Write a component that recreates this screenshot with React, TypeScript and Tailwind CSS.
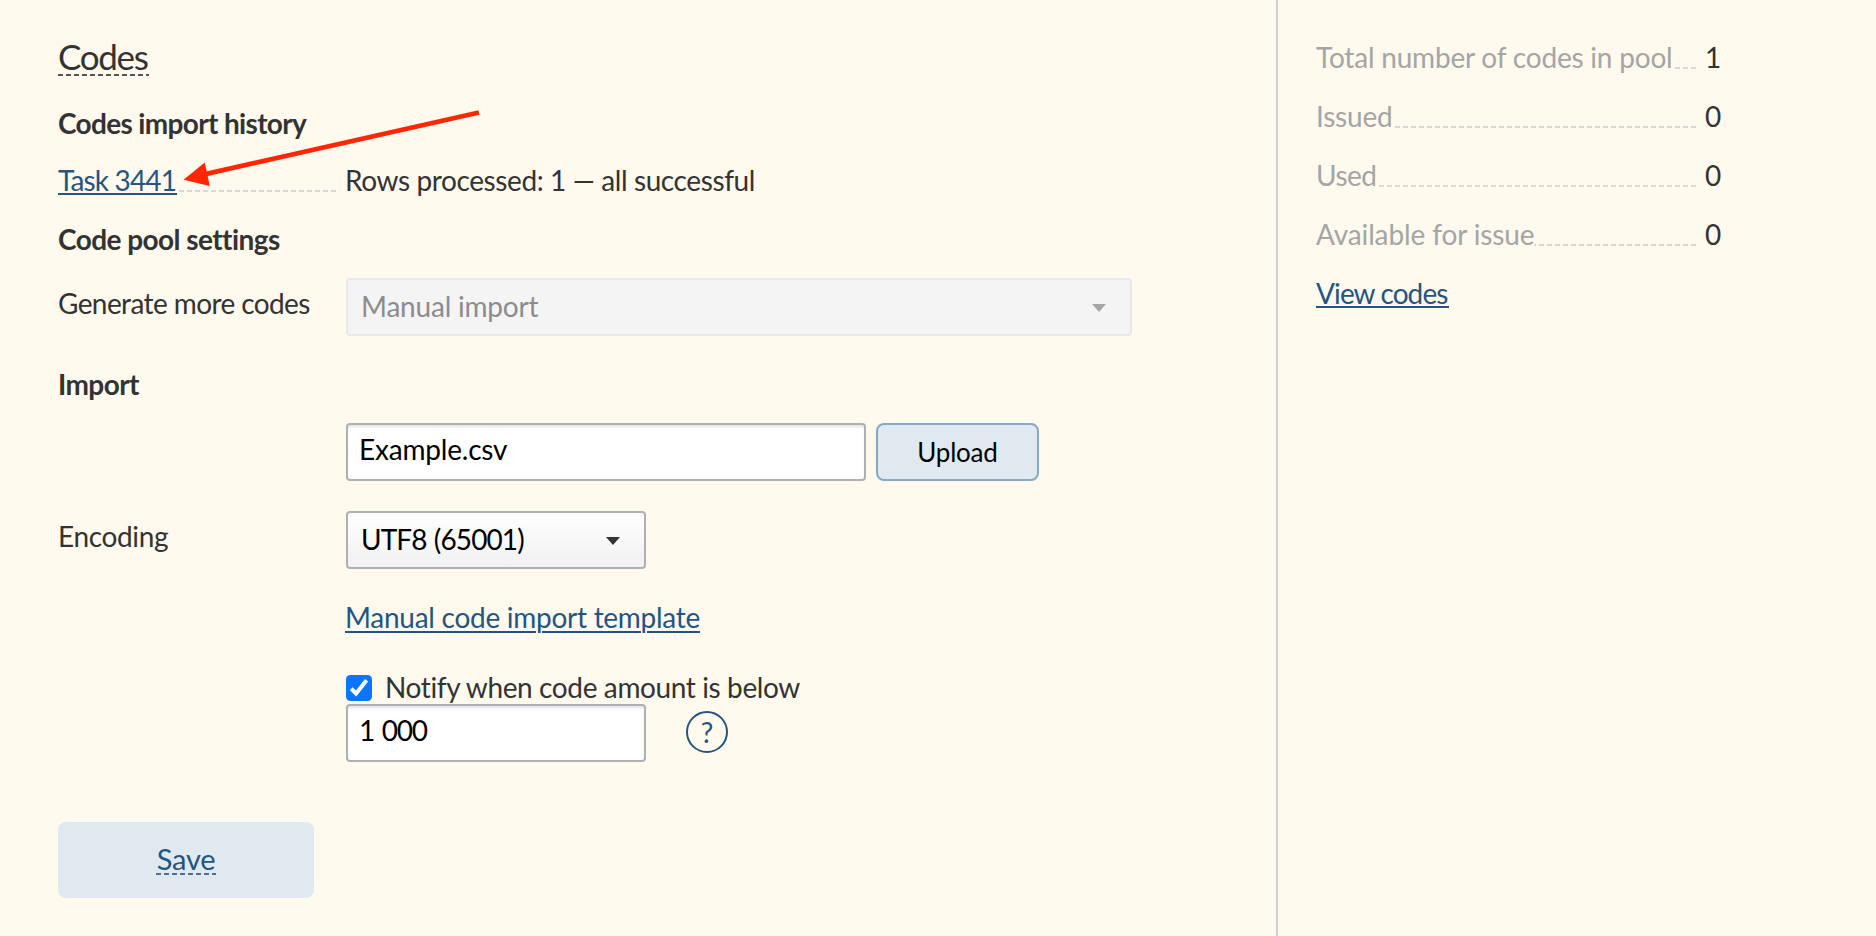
import type { ReactNode } from 'react'
import clsx from 'clsx'

type Stat = {
  label: string
  value: number
  tracking: string
}

const stats: Stat[] = [
  { label: 'Total number of codes in pool', value: 1, tracking: 'tracking-[-0.2px]' },
  { label: 'Issued', value: 0, tracking: 'tracking-[-0.21px]' },
  { label: 'Used', value: 0, tracking: 'tracking-[-0.5px]' },
  { label: 'Available for issue', value: 0, tracking: 'tracking-[-0.12px]' },
]

function Leader({ className }: { className?: string }) {
  return (
    <span
      className={clsx(
        'h-[2px] flex-1 bg-[repeating-linear-gradient(to_left,#d9d9d6_0_5px,transparent_5px_8px)]',
        className
      )}
    />
  )
}

function Caret({ className }: { className?: string }) {
  return (
    <svg viewBox="0 0 14 8" className={clsx('h-2 w-3.5', className)} fill="currentColor">
      <path d="M0 0h14L7 8z" />
    </svg>
  )
}

function Row({ label, children, className }: { label?: ReactNode; children: ReactNode; className?: string }) {
  return (
    <div className={clsx('flex items-start', className)}>
      <div className="w-[288px] shrink-0">{label}</div>
      {children}
    </div>
  )
}

export default function App() {
  return (
    <div className="flex h-[936px] w-[1876px] overflow-hidden bg-[#fff9ee] font-['Lato','Open_Sans',sans-serif] text-[28px] leading-9 whitespace-nowrap text-[#333]">
      <main className="relative w-[1278px] shrink-0 border-r-2 border-[#cfcfcf] pt-9 pl-[58px]">
        <h1 className="relative h-10 w-[91px] text-[35px] leading-10 tracking-[-1.3px]">
          Codes
          <span className="absolute bottom-0 left-0 h-[2px] w-full bg-[repeating-linear-gradient(to_right,#555_0_5px,transparent_5px_8px)]" />
        </h1>

        {/* --- History --- */}
        <h2 className="mt-[29px] font-bold tracking-[-0.66px]">Codes import history</h2>
        <Row
          className="mt-[21px]"
          label={
            <div className="flex w-[278px] items-start">
              <a
                href="#"
                className="relative h-[33px] w-[119px] border-b-2 border-[#245580] tracking-[-0.85px] text-[#245580]"
              >
                Task 3441
              </a>
              <Leader className="mt-[28px]" />
            </div>
          }
        >
          <span className="-ml-px tracking-[-0.4px]">Rows processed: 1 — all successful</span>
        </Row>

        {/* --- Pool settings --- */}
        <h2 className="mt-[23px] font-bold tracking-[-0.56px]">Code pool settings</h2>
        <Row
          className="mt-[21px]"
          label={<div className="pt-[7px] tracking-[-0.6px]">Generate more codes</div>}
        >
          <button
            disabled
            className="flex h-[58px] w-[786px] items-start justify-between rounded border-2 border-[#e9e9e9] bg-[#f4f4f4] pt-2 pr-6 pl-[13px] text-[#8c8c8c]"
          >
            <span className="tracking-[-0.2px]">Manual import</span>
            <Caret className="mt-4 text-[#a6a6a6]" />
          </button>
        </Row>

        {/* --- Import --- */}
        <h2 className="mt-[30px] font-bold tracking-[-0.6px]">Import</h2>
        <Row className="mt-[21px]">
          <input
            type="text"
            defaultValue="Example.csv"
            className="h-[58px] w-[520px] rounded border-2 border-[#afb0b5] bg-white px-[11px] pb-3 pt-1.5 tracking-[-0.2px] text-black shadow-[inset_0_3px_3px_-1px_#e4e4e4] outline-none"
          />
          <button className="ml-2.5 h-[58px] w-[163px] rounded-lg border-2 border-[#85a9c5] bg-[#e1e9f0] text-[26px] tracking-[-0.22px] text-black">
            Upload
          </button>
        </Row>

        <Row className="mt-[30px]" label={<div className="pt-[7px] tracking-[-0.35px]">Encoding</div>}>
          <button className="flex h-[58px] w-[300px] items-start justify-between rounded border-2 border-[#afb0b5] bg-linear-to-b from-white to-[#f1f1f3] pt-2 pr-6 pl-[13px] text-black">
            <span className="tracking-[-0.9px] [word-spacing:1px]">UTF8 (65001)</span>
            <Caret className="mt-4 text-[#333]" />
          </button>
        </Row>

        <Row className="mt-[30px]">
          <a
            href="#"
            className="-ml-px tracking-[-0.27px] text-[#245580] underline decoration-2 underline-offset-[3px]"
          >
            Manual code import template
          </a>
        </Row>

        {/* --- Notification --- */}
        <Row className="mt-[34px]">
          <label className="flex items-start tracking-[-0.38px]">
            <svg viewBox="0 0 26 26" className="mt-1.5 size-[26px]">
              <rect width="26" height="26" rx="4.5" fill="#0a76ff" />
              <path d="M5.2 13.8l4.9 4.7L20.6 5.3" fill="none" stroke="#fff" strokeWidth="4" />
            </svg>
            <span className="ml-[13px]">Notify when code amount is below</span>
          </label>
        </Row>
        <Row className="-mt-px">
          <input
            type="text"
            defaultValue="1 000"
            className="h-[58px] w-[300px] rounded border-2 border-[#afb0b5] bg-white px-[11px] pb-3 pt-1.5 tracking-[-1.3px] text-black shadow-[inset_0_3px_3px_-1px_#e4e4e4] outline-none [word-spacing:2px]"
          />
          <button className="mt-[7px] ml-10 size-[42px] rounded-full border-2 border-[#245580] text-center leading-[38px] text-[#245580]">
            ?
          </button>
        </Row>

        <button className="mt-[60px] flex h-[76px] w-64 justify-center rounded-lg bg-[#e1e9f0] pt-[19px] text-[29px] text-[#245580]">
          <span className="relative block h-[34px] w-[60px] tracking-[-0.3px]">
            Save
            <span className="absolute bottom-0 left-0 h-[2px] w-full bg-[repeating-linear-gradient(to_right,#4a7397_0_5px,transparent_5px_8px)]" />
          </span>
        </button>

        {/* Arrow pointing at the task link */}
        <svg viewBox="0 0 310 90" className="pointer-events-none absolute top-[105px] left-[180px] h-[90px] w-[310px]">
          <path d="M299 7.5L22 69.8" stroke="#ff2600" strokeWidth="4.8" />
          <path d="M3.5 74.7L24.8 57.5L29.8 81z" fill="#ff2600" />
        </svg>
      </main>

      <aside className="pt-[39px] pl-[38px]">
        <dl className="w-[405px]">
          {stats.map((stat) => (
            <div key={stat.label} className="mb-[23px] flex items-start">
              <dt className={clsx('text-[#a5a5a5]', stat.tracking)}>{stat.label}</dt>
              <Leader className="mt-[28px]" />
              <dd className="ml-[9px] w-4 text-[#333]">{stat.value}</dd>
            </div>
          ))}
        </dl>
        <a
          href="#"
          className="inline-block h-[33px] w-[133px] border-b-2 border-[#245580] tracking-[-0.9px] text-[#245580]"
        >
          View codes
        </a>
      </aside>
    </div>
  )
}
